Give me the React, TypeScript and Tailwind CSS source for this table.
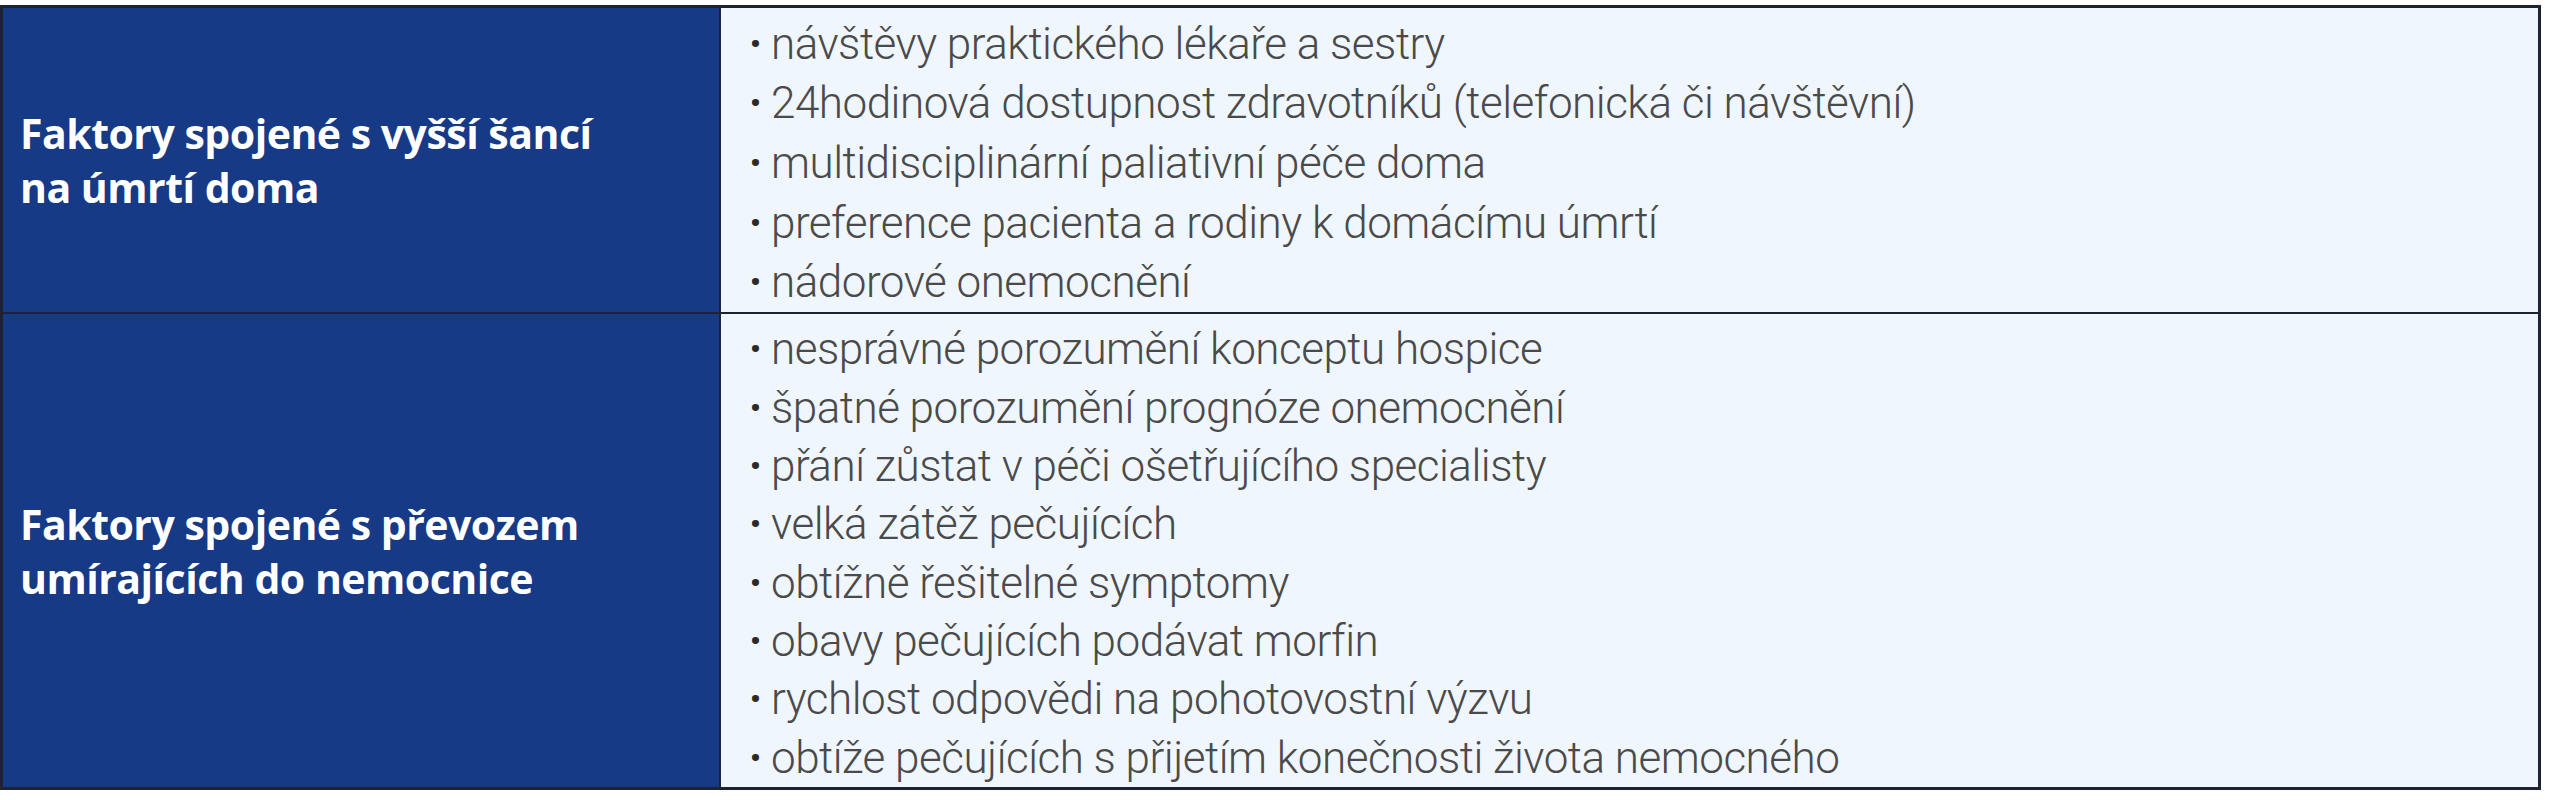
import React from "react";

const rows = [
  {
    title: ["Faktory spojené s vyšší šancí", "na úmrtí doma"],
    height: "h-[304px]",
    items: [
      "návštěvy praktického lékaře a sestry",
      "24hodinová dostupnost zdravotníků (telefonická či návštěvní)",
      "multidisciplinární paliativní péče doma",
      "preference pacienta a rodiny k domácímu úmrtí",
      "nádorové onemocnění",
    ],
  },
  {
    title: ["Faktory spojené s převozem", "umírajících do nemocnice"],
    height: "h-[475px]",
    items: [
      "nesprávné porozumění konceptu hospice",
      "špatné porozumění prognóze onemocnění",
      "přání zůstat v péči ošetřujícího specialisty",
      "velká zátěž pečujících",
      "obtížně řešitelné symptomy",
      "obavy pečujících podávat morfin",
      "rychlost odpovědi na pohotovostní výzvu",
      "obtíže pečujících s přijetím konečnosti života nemocného",
    ],
  },
];

export default function App() {
  return (
    <div className="w-[2555px] h-[800px] bg-white pt-[5px]">
      <div className="w-[2541px] border-[3px] border-[#1d2333] flex flex-col">
        {rows.map((row, i) => (
          <div
            key={i}
            className={`flex ${row.height} ${i > 0 ? "border-t-2 border-[#1d2333]" : ""}`}
          >
            {/* Header cell */}
            <div className="w-[718px] shrink-0 bg-[#163a86] border-r-2 border-[#1d2333] flex items-center pl-[17px]">
              <p className="font-['Open_Sans',sans-serif] font-bold text-white text-[41px] leading-[54px] tracking-[-0.5px]">
                {row.title[0]}
                <br />
                {row.title[1]}
              </p>
            </div>

            {/* Items */}
            <ul className="flex-1 min-h-0 bg-[#eff6fd] flex flex-col pl-[29px] pt-[6px]">
              {row.items.map((item) => (
                <li
                  key={item}
                  className="flex-1 basis-0 min-h-0 flex items-center text-[#4a4a4a] font-['Roboto',sans-serif] font-light text-[44px] leading-[44px] tracking-[-0.5px]"
                >
                  <span className="w-[21px] shrink-0 text-[30px] leading-none font-bold text-[#2a2a2a]">•</span>
                  <span>{item}</span>
                </li>
              ))}
            </ul>
          </div>
        ))}
      </div>
    </div>
  );
}
